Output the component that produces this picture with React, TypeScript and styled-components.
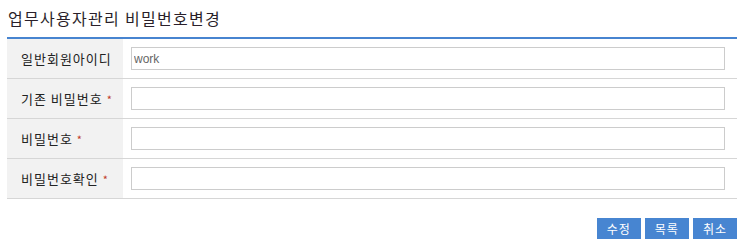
import React from "react";
import styled, { createGlobalStyle } from "styled-components";

const Global = createGlobalStyle`
  html, body { margin: 0; padding: 0; background: #fff; }
  body { font-family: "Noto Sans CJK KR", "Noto Sans", sans-serif; color: #333; }
  * { box-sizing: border-box; }
`;

const Page = styled.div`
  width: 745px;
  padding: 0 8px 0 7px;
`;

const Title = styled.h2`
  margin: 0;
  height: 37px;
  line-height: 37px;
  padding-left: 1px;
  font-size: 16px;
  font-weight: normal;
  color: #2a1f2a;
  letter-spacing: 1.3px;
`;

const Table = styled.div`
  border-top: 2px solid #4784d0;
  display: grid;
  grid-template-columns: 116px 1fr;
`;

const Label = styled.div`
  height: 40px;
  background: #f2f2f2;
  border-bottom: 1px solid #d6d6d6;
  display: flex;
  align-items: center;
  padding-left: 14px;
  font-size: 13px;
  letter-spacing: 1px;
  color: #222;
`;

const Required = styled.span`
  color: #c0392b;
  font-size: 11px;
  margin-left: 4px;
  vertical-align: -3px;
`;

const Cell = styled.div`
  height: 40px;
  border-bottom: 1px solid #d6d6d6;
  display: flex;
  align-items: center;
  padding: 0 12px 0 8px;
`;

const Input = styled.input`
  width: 100%;
  height: 23px;
  border: 1px solid #cccccc;
  padding: 0 2px;
  font-family: "Liberation Sans", Arial, sans-serif;
  font-size: 12px;
  color: #666;
  outline: none;
  background: #fff;
`;

const Actions = styled.div`
  display: flex;
  justify-content: flex-end;
  gap: 4px;
  margin-top: 19px;
`;

const Button = styled.button`
  height: 21px;
  padding: 0 10px;
  border: none;
  background: #4785d1;
  color: #fff;
  font-family: "Noto Sans CJK KR", sans-serif;
  font-size: 12px;
  letter-spacing: 1px;
  line-height: 21px;
  cursor: pointer;
`;

type Row = { label: string; required?: boolean; value?: string; type?: string };

const rows: Row[] = [
  { label: "일반회원아이디", value: "work" },
  { label: "기존 비밀번호", required: true, type: "password" },
  { label: "비밀번호", required: true, type: "password" },
  { label: "비밀번호확인", required: true, type: "password" },
];

export default function App() {
  return (
    <Page>
      <Global />
      <Title>업무사용자관리 비밀번호변경</Title>
      <Table>
        {rows.map((r) => (
          <React.Fragment key={r.label}>
            <Label>
              {r.label}
              {r.required && <Required>*</Required>}
            </Label>
            <Cell>
              <Input type={r.type ?? "text"} defaultValue={r.value ?? ""} />
            </Cell>
          </React.Fragment>
        ))}
      </Table>
      <Actions>
        <Button>수정</Button>
        <Button>목록</Button>
        <Button>취소</Button>
      </Actions>
    </Page>
  );
}
